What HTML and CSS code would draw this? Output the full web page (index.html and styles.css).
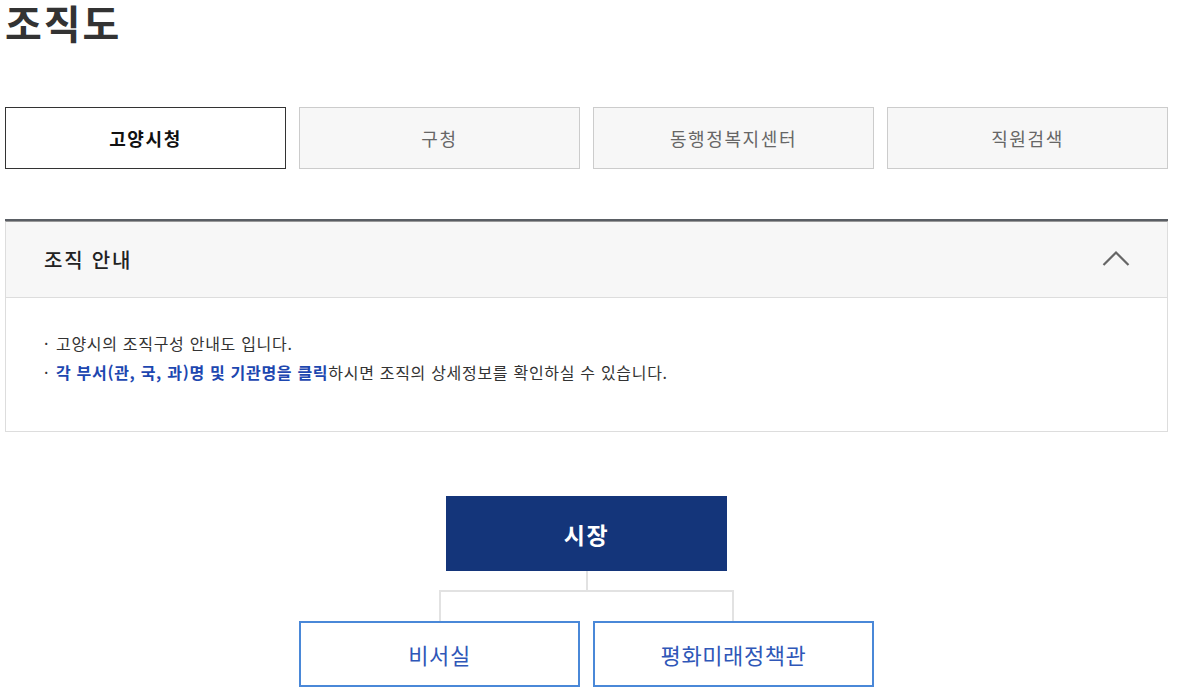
FILE: index.html
```html
<!DOCTYPE html>
<html lang="ko">
<head>
  <meta charset="UTF-8" />
  <meta name="viewport" content="width=device-width, initial-scale=1.0" />
  <title>조직도</title>
  <link rel="stylesheet" href="styles.css">
</head>
<body>
  <div class="container">
    <h1>조직도</h1>

    <ul class="tabs">
      <li class="tab active">고양시청</li>
      <li class="tab">구청</li>
      <li class="tab">동행정복지센터</li>
      <li class="tab">직원검색</li>
    </ul>

    <div class="guide">
      <div class="guide-head">
        <h2>조직 안내</h2>
        <svg class="chevron" width="28" height="16" viewBox="0 0 28 16">
          <polyline points="1.5,15 14,2.5 26.5,15" fill="none" stroke="#666" stroke-width="2.2" />
        </svg>
      </div>
      <ul class="guide-body">
        <li>고양시의 조직구성 안내도 입니다.</li>
        <li><strong>각 부서(관, 국, 과)명 및 기관명을 클릭</strong>하시면 조직의 상세정보를 확인하실 수 있습니다.</li>
      </ul>
    </div>

    <!-- 조직도 -->
    <div class="chart">
      <div class="chief">시장</div>
      <div class="stem"></div>
      <div class="branch">
        <div class="unit">비서실</div>
        <div class="unit">평화미래정책관</div>
      </div>
    </div>
  </div>
</body>
</html>
```

FILE: styles.css
```css
body {
  margin: 0;
  font-family: 'Noto Sans CJK KR', 'Noto Sans', sans-serif;
  color: #333;
  background: white;
}

.container {
  width: 1163px;
  padding-left: 5px;
}

h1 {
  margin: 0;
  font-size: 40px;
  line-height: 44px;
  font-weight: 700;
  color: #333;
  letter-spacing: 2px;
}

.tabs {
  display: grid;
  grid-template-columns: repeat(4, 1fr);
  gap: 13px;
  list-style: none;
  margin: 63px 0 0;
  padding: 0;
}

.tab {
  height: 60px;
  display: flex;
  align-items: center;
  justify-content: center;
  border: 1px solid #ccc;
  background: #f7f7f7;
  color: #666;
  font-size: 18px;
  letter-spacing: 1.6px;
}

.tab.active {
  border-color: #333;
  background: white;
  color: #111;
  font-weight: 700;
}

/* 조직 안내 */
.guide {
  margin-top: 50px;
  border-top: 2px solid #5a5e64;
}

.guide-head {
  display: flex;
  align-items: center;
  justify-content: space-between;
  height: 75px;
  padding: 0 37px 0 38px;
  background: #f7f7f7;
  border: 1px solid #ddd;
  border-top: 1px solid #999;
}

.guide-head h2 {
  margin: 0;
  font-size: 20px;
  font-weight: 500;
  color: #222;
  letter-spacing: 1.8px;
}

.chevron {
  display: block;
  margin-top: -3px;
}

.guide-body {
  list-style: none;
  margin: 0;
  padding: 31px 38px 42px;
  border: 1px solid #ddd;
  border-top: none;
  height: 60px;
}

.guide-body li {
  position: relative;
  padding-left: 12px;
  font-size: 16px;
  line-height: 29px;
  color: #333;
  letter-spacing: 0.7px;
}

.guide-body li::before {
  content: "·";
  position: absolute;
  left: 0;
  top: 0;
}

.guide-body strong {
  color: #1d47b0;
  font-weight: 700;
}

/* 조직도 */
.chart {
  margin-top: 64px;
  display: flex;
  flex-direction: column;
  align-items: center;
}

.chief {
  width: 281px;
  height: 75px;
  display: flex;
  align-items: center;
  justify-content: center;
  background: #14357a;
  color: white;
  font-size: 23px;
  font-weight: 700;
  letter-spacing: 1.5px;
}

.stem {
  width: 2px;
  height: 19px;
  background: #e2e2e2;
}

.branch {
  position: relative;
  display: flex;
  gap: 13px;
  padding-top: 31px;
}

.branch::before {
  content: "";
  position: absolute;
  top: 0;
  left: 140px;
  right: 140px;
  height: 29px;
  border: 2px solid #e2e2e2;
  border-bottom: none;
}

.unit {
  width: 277px;
  height: 62px;
  display: flex;
  align-items: center;
  justify-content: center;
  border: 2px solid #4a88d8;
  background: white;
  color: #2f57b8;
  font-size: 22px;
  letter-spacing: 0.6px;
}
```
